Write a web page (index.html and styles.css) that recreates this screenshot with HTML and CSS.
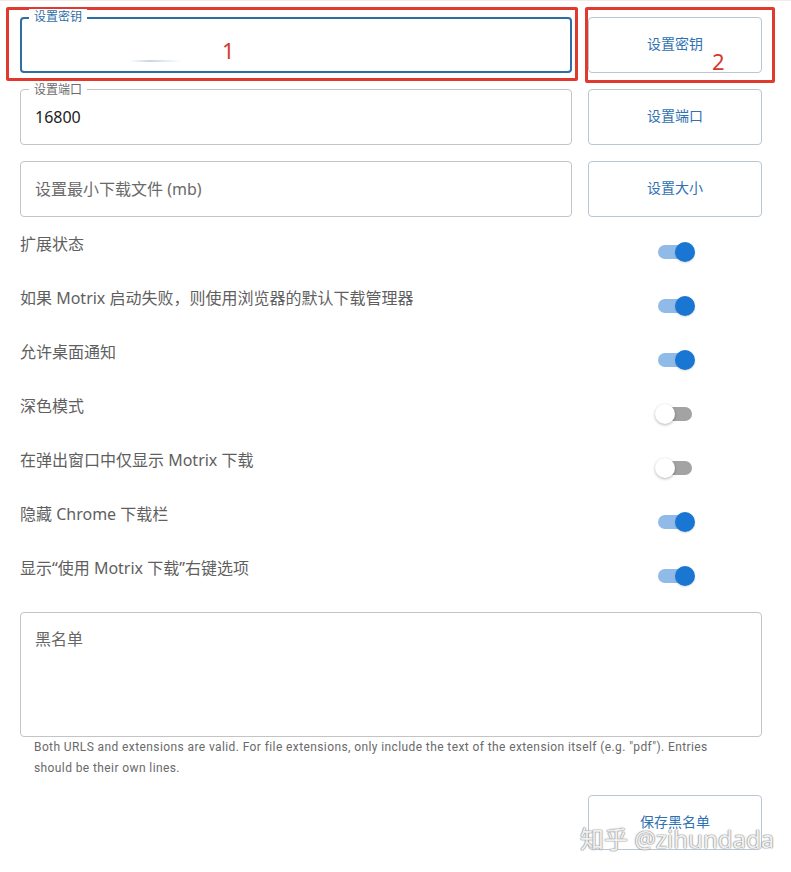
FILE: index.html
```html
<!DOCTYPE html>
<html>
<head>
    <title>Motrix 扩展设置</title>
    <link rel="stylesheet" href="styles.css">
</head>
<body>
    <div class="page">
        <div class="form-grid">
            <div class="field focused">
                <span class="field-label">设置密钥</span>
                <input type="password" class="field-input" />
                <span class="caret-blur"></span>
            </div>
            <button class="action-btn">设置密钥</button>

            <div class="field">
                <span class="field-label">设置端口</span>
                <input type="text" class="field-input" value="16800" />
            </div>
            <button class="action-btn">设置端口</button>

            <div class="field">
                <input type="text" class="field-input" placeholder="设置最小下载文件 (mb)" />
            </div>
            <button class="action-btn">设置大小</button>
        </div>

        <div class="toggle-list">
            <div class="toggle-row">
                <span class="toggle-label">扩展状态</span>
                <span class="switch on"><span class="track"></span><span class="thumb"></span></span>
            </div>
            <div class="toggle-row">
                <span class="toggle-label">如果 Motrix 启动失败，则使用浏览器的默认下载管理器</span>
                <span class="switch on"><span class="track"></span><span class="thumb"></span></span>
            </div>
            <div class="toggle-row">
                <span class="toggle-label">允许桌面通知</span>
                <span class="switch on"><span class="track"></span><span class="thumb"></span></span>
            </div>
            <div class="toggle-row">
                <span class="toggle-label">深色模式</span>
                <span class="switch"><span class="track"></span><span class="thumb"></span></span>
            </div>
            <div class="toggle-row">
                <span class="toggle-label">在弹出窗口中仅显示 Motrix 下载</span>
                <span class="switch"><span class="track"></span><span class="thumb"></span></span>
            </div>
            <div class="toggle-row">
                <span class="toggle-label">隐藏 Chrome 下载栏</span>
                <span class="switch on"><span class="track"></span><span class="thumb"></span></span>
            </div>
            <div class="toggle-row">
                <span class="toggle-label">显示“使用 Motrix 下载”右键选项</span>
                <span class="switch on"><span class="track"></span><span class="thumb"></span></span>
            </div>
        </div>

        <textarea class="blacklist" placeholder="黑名单"></textarea>
        <p class="helper-text">Both URLS and extensions are valid. For file extensions, only include the text of the extension itself (e.g. "pdf"). Entries should be their own lines.</p>

        <div class="save-row">
            <button class="action-btn">保存黑名单</button>
        </div>

        <!-- annotations drawn over the screenshot -->
        <div class="mark mark-1"></div>
        <div class="mark mark-2"></div>
        <span class="mark-num num-1">1</span>
        <span class="mark-num num-2">2</span>
        <span class="watermark">知乎 @zihundada</span>
    </div>
</body>
</html>
```

FILE: styles.css
```css
:root {
    --text: #5f5f5f;
    --border: #c4c4c4;
    --primary: #2f6ea5;
    --btn-text: #2f72b3;
    --btn-border: #b9c6d3;
    --switch-on: #1976d2;
    --switch-on-track: #90bbe8;
    --switch-off-track: #a3a3a3;
    --mark: #e0392e;
}

body {
    margin: 0;
    background: #fff;
    font-family: "Noto Sans", "Noto Sans CJK SC", sans-serif;
    color: var(--text);
}

.page {
    position: relative;
    width: 791px;
    height: 872px;
    padding: 17px 0 0 20px;
    box-sizing: border-box;
    border-top: 1px solid #f5e9e6;
}

.form-grid {
    display: grid;
    grid-template-columns: 552px 174px;
    column-gap: 16px;
    row-gap: 16px;
    margin-top: -1px;
}

.field {
    position: relative;
    height: 56px;
}

.field-input {
    width: 100%;
    height: 56px;
    box-sizing: border-box;
    border: 1px solid var(--border);
    border-radius: 4px;
    padding: 0 14px;
    font-family: "Noto Sans", "Noto Sans CJK SC", sans-serif;
    font-size: 16px;
    color: #222;
    background: #fff;
    outline: none;
}

.field-input::placeholder {
    color: #6a6a6a;
}

.field.focused .field-input {
    border: 2px solid var(--primary);
    padding: 0 13px;
}

.field-label {
    position: absolute;
    top: -7px;
    left: 9px;
    padding: 0 5px;
    background: #fff;
    font-size: 12px;
    line-height: 14px;
    color: #6b6b6b;
    font-family: "Noto Sans CJK SC", sans-serif;
    z-index: 1;
}

.field.focused .field-label {
    color: var(--primary);
    top: -8px;
}

.caret-blur {
    position: absolute;
    left: 109px;
    top: 43px;
    width: 52px;
    height: 2px;
    background: linear-gradient(to right, rgba(200, 214, 228, 0), #c8d6e4 40%, rgba(200, 214, 228, 0));
}

.action-btn {
    height: 56px;
    padding: 0 0 4px;
    background: #fff;
    border: 1px solid var(--btn-border);
    border-radius: 4px;
    color: var(--btn-text);
    font-family: "Noto Sans CJK SC", sans-serif;
    font-size: 14px;
    cursor: pointer;
}

.toggle-list {
    margin-top: 16px;
}

.toggle-row {
    display: grid;
    grid-template-columns: 552px 174px;
    column-gap: 16px;
    height: 54px;
}

.toggle-label {
    font-size: 16px;
    line-height: 22px;
}

.switch {
    position: relative;
    justify-self: center;
    width: 40px;
    height: 20px;
    margin-top: 9px;
}

.switch .track {
    position: absolute;
    left: 3px;
    top: 3px;
    width: 34px;
    height: 14px;
    border-radius: 7px;
    background: var(--switch-off-track);
}

.switch .thumb {
    position: absolute;
    left: 0;
    top: 0;
    width: 20px;
    height: 20px;
    border-radius: 50%;
    background: #fff;
    box-shadow: 0 1px 3px rgba(0, 0, 0, 0.3);
}

.switch.on .track {
    background: var(--switch-on-track);
}

.switch.on .thumb {
    left: 20px;
    background: var(--switch-on);
    box-shadow: 0 1px 2px rgba(0, 0, 0, 0.15);
}

.blacklist {
    display: block;
    width: 742px;
    height: 125px;
    margin-top: 1px;
    box-sizing: border-box;
    border: 1px solid var(--border);
    border-radius: 4px;
    padding: 15px 14px;
    font-family: "Noto Sans", "Noto Sans CJK SC", sans-serif;
    font-size: 16px;
    line-height: 22px;
    resize: none;
    outline: none;
}

.blacklist::placeholder {
    color: #666;
}

.helper-text {
    margin: 0 14px;
    width: 690px;
    font-family: Roboto, sans-serif;
    font-size: 12px;
    line-height: 21px;
    letter-spacing: 0.4px;
    color: #6a6a6a;
}

.save-row {
    display: grid;
    grid-template-columns: 552px 174px;
    column-gap: 16px;
    margin-top: 16px;
}

.save-row .action-btn {
    grid-column: 2;
    height: 55px;
    padding-bottom: 4px;
}

/* annotation overlays */
.mark {
    position: absolute;
    border: 3px solid var(--mark);
    border-radius: 2px;
    box-sizing: border-box;
}

.mark-1 {
    left: 6px;
    top: 6px;
    width: 572px;
    height: 74px;
}

.mark-2 {
    left: 585px;
    top: 6px;
    width: 190px;
    height: 76px;
}

.mark-num {
    position: absolute;
    font-family: "Noto Sans", sans-serif;
    font-size: 22px;
    line-height: 24px;
    color: #d3392d;
}

.num-1 {
    left: 222px;
    top: 37px;
}

.num-2 {
    left: 712px;
    top: 48px;
}

.watermark {
    position: absolute;
    left: 580px;
    top: 825px;
    font-family: "Noto Sans", "Noto Sans CJK SC", sans-serif;
    font-size: 24px;
    line-height: 26px;
    color: rgba(255, 255, 255, 0.9);
    text-shadow: 0 0 1px #888, 0 0 1px #888, 0 0 2px #aaa;
    white-space: nowrap;
}
```
